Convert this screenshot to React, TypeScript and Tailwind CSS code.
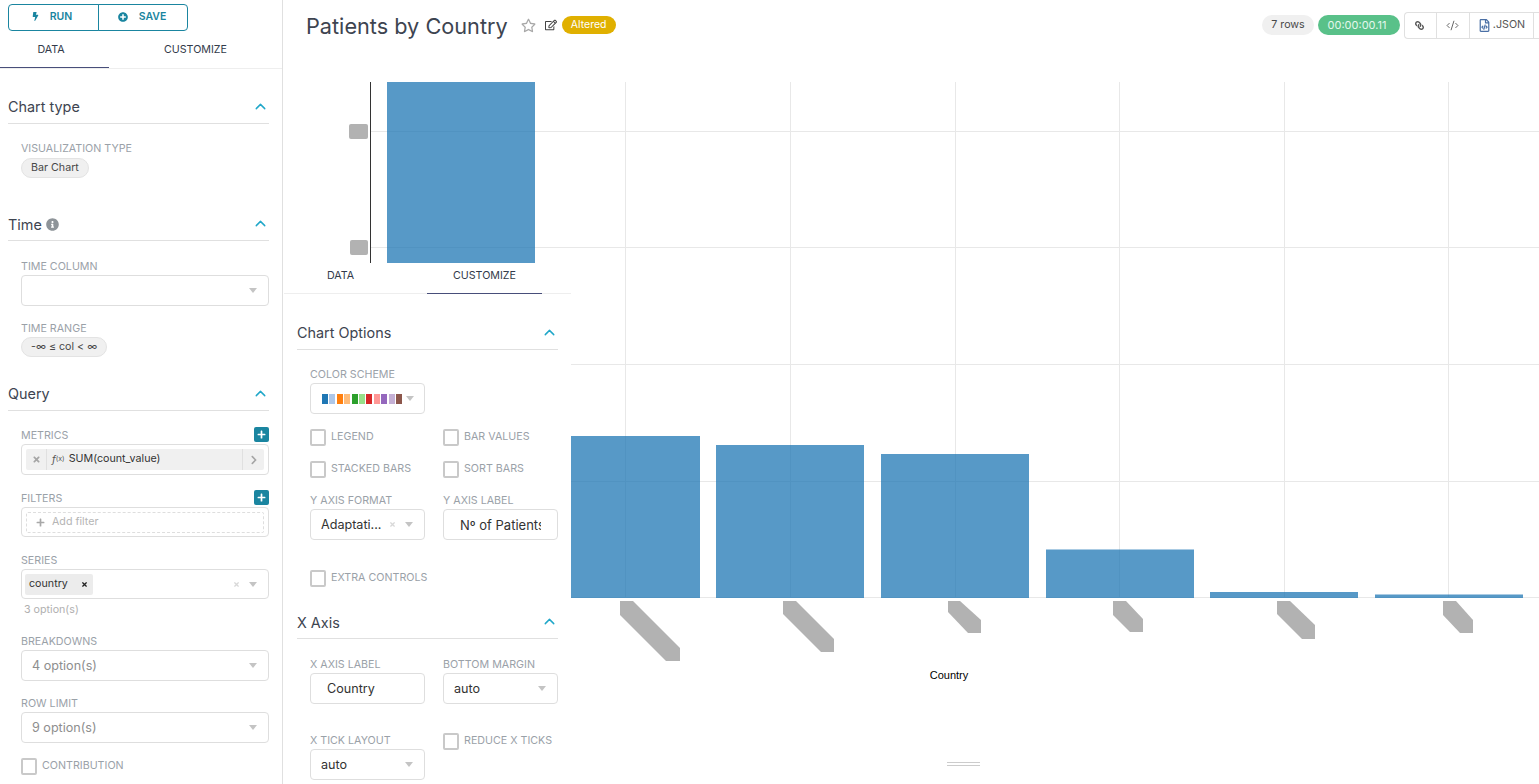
import type { ReactNode } from 'react';
import { ChevronUp, CodeXml } from 'lucide-react';
import {
  FaBolt,
  FaPlusCircle,
  FaRegStar,
  FaRegEdit,
  FaLink,
  FaRegFileCode,
  FaInfoCircle,
  FaPlus,
  FaTimes,
  FaChevronRight,
} from 'react-icons/fa';

const SWATCHES = [
  'bg-[#1f77b4]',
  'bg-[#aec7e8]',
  'bg-[#ff7f0e]',
  'bg-[#ffbb78]',
  'bg-[#2ca02c]',
  'bg-[#98df8a]',
  'bg-[#d62728]',
  'bg-[#ff9896]',
  'bg-[#9467bd]',
  'bg-[#c5b0d5]',
  'bg-[#8c564b]',
];

const BARS = [
  { x: 387, top: 82 },
  { x: 552, top: 436 },
  { x: 716, top: 445 },
  { x: 881, top: 454 },
  { x: 1046, top: 549.5 },
  { x: 1210, top: 592 },
  { x: 1375, top: 594.5 },
];

const TICKS = [
  '620,601 633,601 680,648 680,661 666,661 620,615',
  '783,601 796,601 834,639 834,652 821,652 783,614',
  '948,601 960,601 981,620 981,633 968,633 948,612',
  '1113,601 1126,601 1143,619 1143,632 1130,632 1113,615',
  '1277,601 1290,601 1315,625 1315,639 1302,639 1277,614',
  '1443,601 1456,601 1473,620 1473,633 1460,633 1443,615',
];

function Caret() {
  return (
    <span className="h-0 w-0 border-x-[4px] border-t-[5px] border-x-transparent border-t-[#c4c4c4]" />
  );
}

function Label({ children, className = '' }: { children: ReactNode; className?: string }) {
  return (
    <div className={`-mb-[1px] pt-[1px] text-[10.7px] uppercase leading-[14px] text-[#9aa1a8] ${className}`}>
      {children}
    </div>
  );
}

function SectionHeader({
  title,
  extra,
  titleClassName = '',
  className = '',
}: {
  title: string;
  extra?: ReactNode;
  titleClassName?: string;
  className?: string;
}) {
  return (
    <div className={`flex h-[33px] items-center justify-between border-b border-[#e0e0e0] pb-[1px] ${className}`}>
      <div className={`flex items-center gap-[4px] text-[14.4px] text-[#3d4450] ${titleClassName}`}>
        {title}
        {extra}
      </div>
      <ChevronUp size={17} strokeWidth={2} className="text-[#20a7c9]" />
    </div>
  );
}

function Pill({ children, className = '' }: { children: ReactNode; className?: string }) {
  return (
    <span className={`flex h-[20px] w-fit items-center rounded-full border border-[#e3e3e3] bg-[#f0f0f0] px-[9px] text-[10.7px] text-[#484848] ${className}`}>
      {children}
    </span>
  );
}

function Select({ value, muted, clear, className = '' }: { value?: string; muted?: boolean; clear?: boolean; className?: string }) {
  return (
    <div className={`flex h-[31px] items-center rounded-[4px] border border-[#dedede] pl-[10px] pr-[11px] text-[12.6px] ${muted ? 'text-[#8e8e8e]' : 'text-[#333]'} ${className}`}>
      <span className="flex-1 truncate pt-[2px]">{value}</span>
      {clear && <FaTimes className="mr-[9px] text-[7px] text-[#d8d8d8]" />}
      <Caret />
    </div>
  );
}

function Check({ label, className = '' }: { label: string; className?: string }) {
  return (
    <div className={`flex items-center gap-[5px] ${className}`}>
      <span className="h-[17px] w-[16px] rounded-[2px] border-2 border-[#c9c9c9]" />
      <div className="pb-[2px] text-[10.7px] uppercase leading-[14px] text-[#9aa1a8]">{label}</div>
    </div>
  );
}

function AddButton() {
  return (
    <span className="flex h-[15px] w-[15px] items-center justify-center rounded-[2px] bg-[#1a85a0] text-[9px] text-white">
      <FaPlus />
    </span>
  );
}

function Tab({ children, className = '' }: { children: ReactNode; className?: string }) {
  return <div className={`flex items-center text-[10.7px] text-[#323a4a] ${className}`}>{children}</div>;
}

function Sidebar() {
  return (
    <aside className="h-full w-[283px] shrink-0 overflow-hidden border-r border-[#e0e0e0]">
      <div className="flex h-[31px] pl-[8px] pt-[4px]">
        <button className="flex h-[27px] w-[91px] items-center justify-center gap-[10px] rounded-l-[4px] border border-[#1a85a0] pb-[2px] pr-[4px] text-[10.5px] font-semibold text-[#1a85a0]">
          <FaBolt className="text-[9px]" /> RUN
        </button>
        <button className="-ml-px flex h-[27px] w-[90px] items-center justify-center gap-[11px] rounded-r-[4px] border border-[#1a85a0] pb-[2px] pr-[2px] text-[10.5px] font-semibold text-[#1a85a0]">
          <FaPlusCircle className="text-[10px]" /> SAVE
        </button>
      </div>
      <div className="flex border-b border-[#eeeeee]">
        <Tab className="-mb-px h-[37px] w-[109px] justify-center border-b border-[#484e7a] pr-[7px] pt-[3px]">DATA</Tab>
        <Tab className="h-[37px] flex-1 justify-center pt-[2px]">CUSTOMIZE</Tab>
      </div>

      <div className="pl-[8px] pr-[13px]">
        <SectionHeader title="Chart type" className="mt-[22px]" />
        <div className="pl-[13px]">
          <Label className="mt-[17px]">Visualization Type</Label>
          <Pill className="mt-[3px]">Bar Chart</Pill>
        </div>

        <SectionHeader
          title="Time"
          titleClassName="pt-[2px]"
          extra={<FaInfoCircle className="text-[13px] text-[#8e9499]" />}
          className="mt-[30px]"
        />
        <div className="pl-[13px]">
          <Label className="mt-[18px]">Time Column</Label>
          <Select className="mt-[2px]" />
          <Label className="mt-[15px]">Time Range</Label>
          <Pill className="mt-[2px]">-∞ ≤ col &lt; ∞</Pill>
        </div>

        <SectionHeader title="Query" className="mt-[21px]" />
        <div className="pl-[13px]">
          <div className="mt-[16px] flex items-end justify-between">
            <Label>Metrics</Label>
            <AddButton />
          </div>
          <div className="mt-[2px] flex h-[31px] items-center rounded-[4px] border border-[#dedede] px-[4px]">
            <div className="flex h-[21px] flex-1 items-center rounded-[2px] bg-[#f0f0f0] text-[10.7px] text-[#333]">
              <span className="flex h-full w-[21px] items-center justify-center border-r border-[#e0e0e0] text-[9px] text-[#a5a5a5]">
                <FaTimes />
              </span>
              <span className="ml-[5px] mr-[4px] flex items-center italic text-[#555]">
                <span className="text-[10px]">f</span>
                <span className="text-[7px] not-italic">(x)</span>
              </span>
              SUM(count_value)
              <span className="ml-auto flex h-full w-[22px] items-center justify-center border-l border-[#e0e0e0] text-[10px] text-[#a5a5a5]">
                <FaChevronRight />
              </span>
            </div>
          </div>
          <div className="mt-[15px] flex items-end justify-between">
            <Label>Filters</Label>
            <AddButton />
          </div>
          <div className="mt-[2px] flex h-[30px] items-center rounded-[4px] border border-[#dedede] px-[4px]">
            <div className="flex h-[21px] flex-1 items-center gap-[7px] rounded-[2px] border border-dashed border-[#dedede] pl-[9px] text-[10.7px] text-[#b5b5b5]">
              <FaPlus className="text-[9px] text-[#a8a8a8]" /> Add filter
            </div>
          </div>
          <Label className="mt-[16px]">Series</Label>
          <div className="mt-[2px] flex h-[30px] items-center rounded-[4px] border border-[#dedede] pl-[3px] pr-[11px]">
            <span className="flex h-[21px] w-[68px] items-center justify-between rounded-[2px] bg-[#ececec] pl-[4px] pr-[5px] text-[10.7px] text-[#333]">
              country <FaTimes className="text-[7px] text-[#222]" />
            </span>
            <FaTimes className="ml-auto mr-[9px] text-[7px] text-[#d8d8d8]" />
            <Caret />
          </div>
          <div className="mt-[4px] pl-[3px] text-[10.7px] leading-[14px] text-[#b0b0b0]">3 option(s)</div>
          <Label className="mt-[17px]">Breakdowns</Label>
          <Select value="4 option(s)" muted className="mt-[2px]" />
          <Label className="mt-[15px]">Row Limit</Label>
          <Select value="9 option(s)" muted className="mt-[2px]" />
          <Check label="Contribution" className="mt-[15px]" />
        </div>
      </div>
    </aside>
  );
}

function ChartPicture() {
  return (
    <svg width={1256} height={702} viewBox="283 82 1256 702" className="block">
      {[131, 247, 364, 481, 597].map((y) => (
        <line key={y} x1={370} x2={1539} y1={y + 0.5} y2={y + 0.5} stroke="#e8e8e8" />
      ))}
      {[625, 790, 955, 1119, 1284, 1448].map((x) => (
        <line key={x} x1={x + 0.5} x2={x + 0.5} y1={82} y2={597} stroke="#e8e8e8" />
      ))}
      <line x1={370.5} x2={370.5} y1={82} y2={264} stroke="#333" />
      {BARS.map((b) => (
        <rect key={b.x} x={b.x} y={b.top} width={148} height={598 - b.top} fill="#1f77b4" fillOpacity={0.75} />
      ))}
      <rect x={349} y={124} width={19} height={15} rx={2} fill="#b2b2b2" />
      <rect x={350} y={240} width={18} height={15} rx={2} fill="#b2b2b2" />
      {TICKS.map((p) => (
        <polygon key={p} points={p} fill="#b2b2b2" />
      ))}
      <text x={949} y={679} textAnchor="middle" fontSize={11} fontFamily="'Liberation Sans', sans-serif" fill="#000">
        Country
      </text>
      <line x1={947} x2={980} y1={762.5} y2={762.5} stroke="#ccc" />
      <line x1={947} x2={980} y1={765.5} y2={765.5} stroke="#ccc" />
    </svg>
  );
}

// customize tab lying over the chart
function CustomizePanel() {
  return (
    <div className="absolute left-[1px] top-[263px] h-[521px] w-[287px] bg-white">
      <div className="flex border-b border-[#eeeeee]">
        <Tab className="h-[30px] w-[143px] pb-[4px] pl-[43px]">DATA</Tab>
        <Tab className="-mb-px h-[31px] w-[115px] justify-center border-b border-[#484e7a] pb-[4px]">CUSTOMIZE</Tab>
      </div>
      <div className="pl-[13px] pr-[13px]">
        <SectionHeader title="Chart Options" className="mt-[23px]" />
        <div className="pl-[13px]">
          <Label className="mt-[17px]">Color Scheme</Label>
          <div className="mt-[2px] flex h-[31px] w-[115px] items-center rounded-[4px] border border-[#dedede] pl-[11px]">
            <div className="flex gap-[1.4px]">
              {SWATCHES.map((c) => (
                <span key={c} className={`h-[10px] w-[6px] ${c}`} />
              ))}
            </div>
            <span className="ml-[4px] flex"><Caret /></span>
          </div>
          <div className="mt-[15px] grid grid-cols-[115px_115px] gap-x-[18px] gap-y-[15px]">
            <Check label="Legend" />
            <Check label="Bar Values" />
            <Check label="Stacked Bars" />
            <Check label="Sort Bars" />
            <div>
              <Label>Y Axis Format</Label>
              <Select value="Adaptati..." clear className="mt-[2px]" />
            </div>
            <div>
              <Label>Y Axis Label</Label>
              <div className="mt-[2px] flex h-[31px] items-center rounded-[4px] border border-[#dedede] pl-[16px]">
                <input
                  readOnly
                  value="Nº of Patients"
                  className="w-[81px] bg-transparent pt-[2px] text-[13px] text-[#333] outline-none"
                />
              </div>
            </div>
          </div>
          <Check label="Extra Controls" className="mt-[30px]" />
        </div>

        <SectionHeader title="X Axis" titleClassName="pt-[2px]" className="mt-[19px]" />
        <div className="pl-[13px]">
          <div className="mt-[18px] grid grid-cols-[115px_115px] gap-x-[18px] gap-y-[29px]">
            <div>
              <Label>X Axis Label</Label>
              <div className="mt-[2px] flex h-[31px] items-center rounded-[4px] border border-[#dedede] pl-[16px] pt-[2px] text-[12.6px] text-[#333]">
                Country
              </div>
            </div>
            <div>
              <Label>Bottom Margin</Label>
              <Select value="auto" className="mt-[2px]" />
            </div>
            <div>
              <Label>X Tick Layout</Label>
              <Select value="auto" className="mt-[2px]" />
            </div>
            <Check label="Reduce X Ticks" className="h-[17px]" />
          </div>
        </div>
      </div>
    </div>
  );
}

export default function App() {
  return (
    <div className="flex h-[784px] w-[1539px] overflow-hidden bg-white font-['Inter',sans-serif]">
      <Sidebar />
      <main className="relative min-w-0 flex-1">
        <header className="flex h-[82px] items-start pl-[23px] pt-[11px]">
          <h1 className="text-[21.7px] leading-[30px] text-[#3d4450]">Patients by Country</h1>
          <FaRegStar className="ml-[13px] mt-[7px] text-[15px] text-[#a8a8a8]" />
          <FaRegEdit className="ml-[9px] mt-[8px] text-[12px] text-[#444]" />
          <span className="ml-[5px] mt-[5px] flex h-[18px] w-[54px] items-center justify-center rounded-full bg-[#e0b000] text-[10.5px] text-white">
            Altered
          </span>
          <div className="ml-auto mt-[1px] flex items-start">
            <span className="mt-[3px] flex h-[20px] w-[52px] items-center justify-center rounded-full bg-[#f0f0f0] text-[10.7px] text-[#484848]">
              7 rows
            </span>
            <span className="ml-[4px] mt-[3px] flex h-[20px] w-[82px] items-center justify-center rounded-full bg-[#59c189] pr-[4px] text-[11px] text-[#e4f7ec]">
              00:00:00.11
            </span>
            <div className="ml-[4px] flex h-[27px] w-[135px] items-center rounded-l-[4px] border-y border-l border-[#e0e0e0] text-[#555]">
              <span className="flex h-full w-[32px] items-center justify-center border-r border-[#e0e0e0] pr-[3px] text-[9px]">
                <FaLink className="-scale-x-100" />
              </span>
              <span className="flex h-full w-[33px] items-center justify-center border-r border-[#e0e0e0] pr-[2px] text-[#444]">
                <CodeXml size={13} strokeWidth={1.5} />
              </span>
              <span className="flex h-full w-[64px] items-center justify-center gap-[2px] border-r border-[#e0e0e0] text-[10.7px]">
                <FaRegFileCode className="text-[13px] text-[#4a6fa5]" /> .JSON
              </span>
            </div>
          </div>
        </header>
        <ChartPicture />
        <CustomizePanel />
      </main>
    </div>
  );
}
